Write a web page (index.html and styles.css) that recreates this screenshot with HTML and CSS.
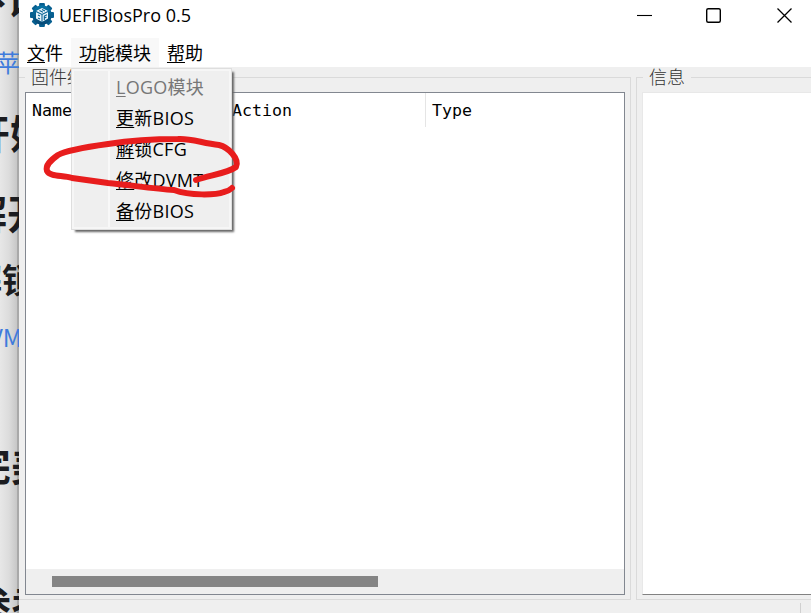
FILE: index.html
```html
<!DOCTYPE html>
<html lang="zh-CN">
<head>
<meta charset="utf-8">
<title>UEFIBiosPro 0.5</title>
<link rel="stylesheet" href="styles.css">
</head>
<body>
<div class="desktop">
  <aside class="article">
    <div class="line l1"><span>不认</span></div>
    <div class="line l2 link"><span>苹果</span></div>
    <div class="line l3"><span>开始</span></div>
    <div class="line l4"><span>解开</span></div>
    <div class="line l5"><span>解锁</span></div>
    <div class="line l6 link"><span>VMT</span></div>
    <div class="line l7"><span>完美</span></div>
    <div class="line l8"><span>参考</span></div>
  </aside>
  <main class="window">
    <header class="titlebar">
      <svg class="logo" width="26" height="26" viewBox="-13 -13 26 26">
        <defs><linearGradient id="g" x2="0" y2="1"><stop stop-color="#0876a8"/><stop offset="1" stop-color="#064875"/></linearGradient></defs>
        <g fill="#075f90">
          <rect x="-2.900" y="-12" width="5.800" height="24" rx="1"/>
          <rect x="-2.900" y="-12" width="5.800" height="24" rx="1" transform="rotate(45)"/>
          <rect x="-2.900" y="-12" width="5.800" height="24" rx="1" transform="rotate(90)"/>
          <rect x="-2.900" y="-12" width="5.800" height="24" rx="1" transform="rotate(135)"/>
          <circle r="9.800" fill="url(#g)"/>
        </g>
        <path d="M0-7 6-4V3.500L0 7-6 3.500V-4Z" fill="#eaf5fb"/>
        <path d="M-6-3.500 0-.5 6-3.500M0-.5V7M-4 0-2 1M-4 3-2 4M2.300 5V1L5-.3M2.500 3 4.500 2M-2.500-4.500 1-2.800M0-5.500 3-4" fill="none" stroke="#086394" stroke-width="1.100"/>
      </svg>
      <h1>UEFIBiosPro 0.5</h1>
      <svg class="controls" width="160" height="30" viewBox="0 0 160 30" fill="none" stroke="#000">
        <path d="M0 15.500H15" stroke-width="1.100"/>
        <rect x="69.700" y="8.700" width="13.600" height="13.600" rx="1.500" stroke-width="1.400"/>
        <path d="M140.500 8.500 154.500 22.500M154.500 8.500 140.500 22.500" stroke-width="1.300"/>
      </svg>
    </header>
    <nav class="menubar">
      <span class="item"><u>文</u>件</span>
      <div class="item open"><u>功</u>能模块
        <div class="menu">
          <div class="entry disabled"><u>L</u>OGO模块</div>
          <div class="entry"><u>更</u>新BIOS</div>
          <div class="entry"><u>解</u>锁CFG</div>
          <div class="entry"><u>修</u>改DVMT</div>
          <div class="entry"><u>备</u>份BIOS</div>
        </div>
      </div>
      <span class="item"><u>帮</u>助</span>
    </nav>
    <div class="content">
      <fieldset class="group structure">
        <legend>固件结构</legend>
        <div class="tree">
          <div class="head"><span>Name</span><span>Action</span><span>Type</span></div>
          <div class="scroll"><div class="thumb"></div></div>
        </div>
      </fieldset>
      <fieldset class="group info">
        <legend>信息</legend>
        <div class="panel"></div>
      </fieldset>
    </div>
    <footer class="status"><i></i></footer>
  </main>
  <svg class="markup" width="811" height="613" viewBox="0 0 811 613">
    <path d="M196 180C211 175 228 173 236 167C240 159 228 147 219 145C202 143 190 138 178 139C149 139 127 141 108 144C86 147 65 151 58 155C51 160 45 165 47 171C50 177 62 175 72 178L108 183C130 185 154 189 174 190C190 196 216 195 224 192Q229 191 232 188" fill="none" stroke="#e81d1d" stroke-width="6" stroke-linecap="round" stroke-linejoin="round"/>
  </svg>
</div>
</body>
</html>
```
FILE: styles.css
```css
* { box-sizing: border-box; }
body {
  margin: 0;
  overflow: hidden;
  font: 18px/24px "Open Sans", "Noto Sans CJK SC", sans-serif;
  color: #000;
}
.desktop { position: relative; display: flex; width: 811px; height: 613px; overflow: hidden; }
.article {
  width: 19px;
  flex: none;
  overflow: hidden;
  background: linear-gradient(90deg, #e7e7e7, #dcdcdc 9px, #c7c7c7 17px, #a9a9a9 17px);
  color: #1b1c20;
  font: bold 40px/50px "Noto Sans CJK SC", sans-serif;
}
.line { white-space: nowrap; }
.line span { display: inline-block; }
.l1 { height: 42px; margin-top: -28px; margin-left: -34px; }
.link { color: #3f7bdc; font-weight: 400; font-size: 24px; }
.l2 { height: 92px; margin-top: 23px; margin-left: -4px; }
.l3 { height: 80px; margin-top: -22px; margin-left: -30px; }
.l4 { height: 67px; margin-left: -33px; }
.l5 { height: 58px; font-size: 34px; margin-left: -32px; }
.l6 { height: 110px; margin-left: -11px; }
.l7 { height: 138px; margin-top: 17px; margin-left: -29px; }
.l8 { height: 50px; margin-left: -29px; }

.window { flex: 1; display: flex; flex-direction: column; min-width: 0; background: #efefef; }
.titlebar { display: flex; height: 35px; background: #fff; align-items: flex-start; }
.logo { margin: 2px 4px 0 10px; }
h1 { flex: 1; margin: 3px 0 0; font-size: 18px; font-weight: 400; white-space: nowrap; }
.controls { margin-right: 14px; }
.menubar { display: flex; height: 32px; padding-top: 3px; background: #fff; }
.item { height: 29px; padding: 3px 8px 0; line-height: 24px; white-space: nowrap; }
u { text-decoration: underline; text-decoration-thickness: 1px; text-underline-offset: 2px; }
.open { position: relative; background: #f8f8f8; }
.menu {
  position: absolute;
  z-index: 2;
  left: 0;
  top: 30px;
  width: 161px;
  height: 162px;
  padding: 3px 0 0 44px;
  border: 1px solid #dedede;
  background: linear-gradient(90deg, transparent 36px, #f8f8f8 36px, #f8f8f8 38px, transparent 38px), #efefef;
  box-shadow: inset 0 0 0 2px #f6f6f6, 3px 3px 2px -1px #666;
}
.entry { height: 31px; line-height: 31px; letter-spacing: .25px; }
.disabled { color: #777; }

.content { display: flex; height: 533px; gap: 5px; }
.group { margin: 10px 0 0; padding: 0; min-width: 0; border: 1px solid #dadada; }
.group legend { display: block; float: left; height: 18px; margin: -11px 0 7px 6px; padding: 0 6px; background: #efefef; line-height: 20px; color: #333; font-weight: 300; }
.structure { width: 612px; height: 523px; border-left: 0; }
.info { flex: 1; height: 523px; border-right: 0; }
.tree {
  clear: both;
  display: flex;
  flex-direction: column;
  width: 600px;
  height: 503px;
  margin: 0 0 0 6px;
  border: 1px solid #828790;
  background: #fff;
}
.head { display: grid; grid-template-columns: 200px 200px 1fr; height: 34px; font: 16.6px/36px "DejaVu Sans Mono", monospace; }
.head span { height: 34px; padding-left: 6px; border-right: 1px solid #e5e5e5; }
.head span:last-child { border: 0; }
.scroll { height: 25px; margin-top: auto; padding: 7px 0 0 26px; background: #efefef; }
.thumb { width: 326px; height: 11px; background: #858585; }
.panel { clear: both; height: 503px; margin: 0 0 0 5px; border: 1px solid #e8e8e8; border-right: 0; border-bottom-color: #828282; background: #fff; }
.status { display: flex; flex: 1; padding: 3px 10px 0 0; justify-content: flex-end; }
.status i { width: 1px; background: #d0d0d0; }
.markup { position: absolute; z-index: 3; inset: 0; pointer-events: none; }
```
